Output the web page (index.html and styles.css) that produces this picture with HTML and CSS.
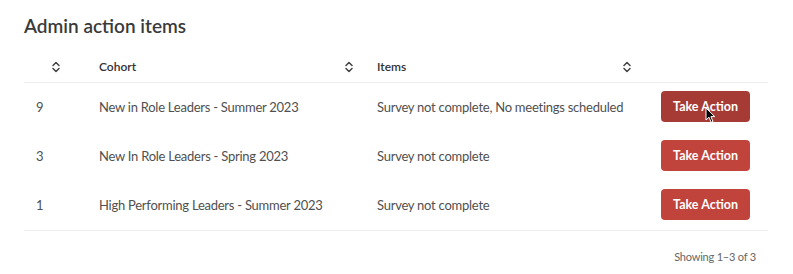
FILE: index.html
```html
<!DOCTYPE html>
<html lang="en">
  <head>
    <meta charset="utf-8" />
    <title>Admin action items</title>
    <link rel="stylesheet" href="styles.css">
  </head>
  <body>
    <div class="panel">
      <h2 class="title">Admin action items</h2>
      <table class="grid">
        <thead>
          <tr>
            <th class="col-count">
              <div class="th-inner th-center">
                <svg class="sort" width="8" height="12" viewBox="0 0 8 12"><polyline points="1,4.5 4,1.5 7,4.5" /><polyline points="1,7.5 4,10.5 7,7.5" /></svg>
              </div>
            </th>
            <th class="col-cohort">
              <div class="th-inner">
                <span>Cohort</span>
                <svg class="sort" width="8" height="12" viewBox="0 0 8 12"><polyline points="1,4.5 4,1.5 7,4.5" /><polyline points="1,7.5 4,10.5 7,7.5" /></svg>
              </div>
            </th>
            <th class="col-items">
              <div class="th-inner">
                <span>Items</span>
                <svg class="sort" width="8" height="12" viewBox="0 0 8 12"><polyline points="1,4.5 4,1.5 7,4.5" /><polyline points="1,7.5 4,10.5 7,7.5" /></svg>
              </div>
            </th>
            <th class="col-action"></th>
          </tr>
        </thead>
        <tbody>
          <tr>
            <td>9</td>
            <td>New in Role Leaders - Summer 2023</td>
            <td>Survey not complete, No meetings scheduled</td>
            <td class="cell-action">
              <button type="button" class="action-btn action-btn-hover">Take Action</button>
              <svg class="cursor" width="11" height="17" viewBox="0 0 11 17"><path d="M1 1 L1 13 L4 10.2 L6.2 15.3 L8 14.5 L5.9 9.6 L9.8 9.6 Z" /></svg>
            </td>
          </tr>
          <tr>
            <td>3</td>
            <td>New In Role Leaders - Spring 2023</td>
            <td>Survey not complete</td>
            <td class="cell-action">
              <button type="button" class="action-btn">Take Action</button>
            </td>
          </tr>
          <tr>
            <td>1</td>
            <td>High Performing Leaders - Summer 2023</td>
            <td>Survey not complete</td>
            <td class="cell-action">
              <button type="button" class="action-btn">Take Action</button>
            </td>
          </tr>
        </tbody>
      </table>
      <div class="pager">Showing 1–3 of 3</div>
    </div>
  </body>
</html>
```

FILE: styles.css
```css
body {
  margin: 0;
  padding: 0;
  background-color: white;
  font-family: Lato, "Open Sans", sans-serif;
  color: #444;
}
.panel {
  width: 744px;
  padding: 14px 0 0 24px;
}
.title {
  margin: 0;
  font-size: 19px;
  line-height: 24px;
  font-weight: 600;
  color: #3a3a3a;
  height: 38px;
}
.grid {
  width: 744px;
  border-collapse: collapse;
  table-layout: fixed;
}
.grid th,
.grid td {
  box-sizing: border-box;
}
.col-count {
  width: 63px;
}
.col-cohort,
.col-items {
  width: 278px;
}
.col-action {
  width: 125px;
}
.grid th {
  height: 30px;
  padding: 0 12px;
  border-bottom: 1px solid #ebedf0;
  font-size: 12px;
  font-weight: 600;
  color: #333;
  text-align: left;
}
.th-inner {
  display: flex;
  align-items: center;
  justify-content: space-between;
}
.th-center {
  justify-content: center;
}
.sort {
  display: block;
  fill: none;
  stroke: #444;
  stroke-width: 1.5;
  stroke-linecap: round;
  stroke-linejoin: round;
}
.grid td {
  height: 49px;
  padding: 0 12px;
  font-size: 13px;
  letter-spacing: -0.25px;
  color: #505050;
  white-space: nowrap;
}
.grid tbody tr:last-child td {
  height: 50px;
  border-bottom: 1px solid #eeeeee;
}
.cell-action {
  position: relative;
  text-align: center;
}
.action-btn {
  width: 89px;
  height: 31px;
  border: 0;
  border-radius: 4px;
  background-color: #c0443c;
  color: white;
  font-family: Lato, "Open Sans", sans-serif;
  font-size: 12.5px;
  font-weight: 700;
  cursor: pointer;
  padding: 0;
}
.action-btn-hover {
  background-color: #a63b35;
}
.cursor {
  position: absolute;
  left: 62px;
  top: 24px;
  fill: black;
  stroke: white;
  stroke-width: 1;
  stroke-linejoin: round;
}
.pager {
  text-align: right;
  padding: 19px 12px 0 0;
  font-size: 11px;
  letter-spacing: -0.2px;
  color: #666;
}
```
